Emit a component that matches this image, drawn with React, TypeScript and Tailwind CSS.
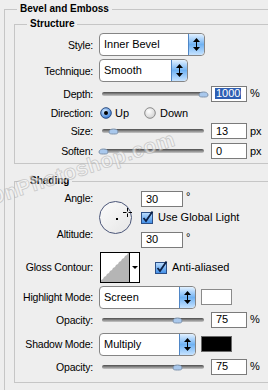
import React from 'react';

function Spinner() {
  return (
    <div className="flex h-full w-[16px] shrink-0 items-center justify-center rounded-r-[4px] border-l border-[#4f86c6] bg-gradient-to-b from-[#e2f1ff] via-[#6fb2f3] to-[#c6e3ff]">
      <svg width="7" height="13" viewBox="0 0 7 13">
        <path d="M3.5 0L7 4H0z M3 4h1v5H3z M0 9h7l-3.5 4z" fill="#000" />
      </svg>
    </div>
  );
}

function Select({ value, width }: { value: string; width: string }) {
  return (
    <div className={`flex h-[23px] items-center overflow-hidden rounded-[4px] border border-[#858585] bg-white ${width}`}>
      <span className="flex-1 pl-[4px] text-[11px]">{value}</span>
      <Spinner />
    </div>
  );
}

function Slider({ thumb }: { thumb: number }) {
  return (
    <div className="relative flex h-[14px] w-[106px] shrink-0 items-center pl-[3px]">
      <div className="h-[4px] w-[102px] rounded-full bg-gradient-to-b from-[#4c4c4c] via-[#8a8a8a] to-[#c8c8c8]" />
      <svg className="absolute top-[4px]" style={{ left: thumb - 5 }} width="11" height="7" viewBox="0 0 11 7">
        <path d="M1 4C1 2 3 1 5.5 1S10 2 10 4 8 6 5.5 6 1 6 1 4z" fill="#a9c8ec" stroke="#7f94ad" strokeWidth="1" />
      </svg>
    </div>
  );
}

function NumBox({ value, width = 'w-[36px]', selected = false }: { value: string; width?: string; selected?: boolean }) {
  return (
    <div className={`flex h-[16px] shrink-0 items-center border border-[#7b7b7b] bg-white pl-[3px] text-[11px] leading-none ${width}`}>
      <span className={selected ? 'bg-[#2f5fb3] px-[1px] text-white' : 'px-[1px]'}>{value}</span>
    </div>
  );
}

function Label({ children }: { children: React.ReactNode }) {
  return <div className="w-[78px] shrink-0 text-right text-[10.5px] leading-[14px] tracking-[-0.2px]">{children}</div>;
}

function Radio({ on }: { on: boolean }) {
  return on ? (
    <svg width="12" height="12" viewBox="0 0 12 12">
      <defs>
        <radialGradient id="rb" cx="0.4" cy="0.35" r="0.7">
          <stop offset="0" stopColor="#d8ecff" />
          <stop offset="1" stopColor="#2f78d8" />
        </radialGradient>
      </defs>
      <circle cx="6" cy="6" r="5.3" fill="url(#rb)" stroke="#2b4c80" />
      <circle cx="6" cy="6" r="2" fill="#000" />
    </svg>
  ) : (
    <svg width="12" height="12" viewBox="0 0 12 12">
      <defs>
        <radialGradient id="rw" cx="0.4" cy="0.35" r="0.7">
          <stop offset="0" stopColor="#ffffff" />
          <stop offset="1" stopColor="#cfcfcf" />
        </radialGradient>
      </defs>
      <circle cx="6" cy="6" r="5.3" fill="url(#rw)" stroke="#8a8a8a" />
    </svg>
  );
}

function Check() {
  return (
    <svg width="13" height="13" viewBox="0 0 13 13" className="shrink-0">
      <defs>
        <linearGradient id="cb" x1="0" y1="0" x2="0" y2="1">
          <stop offset="0" stopColor="#bfe0ff" />
          <stop offset="1" stopColor="#3d8ce6" />
        </linearGradient>
      </defs>
      <rect x="0.5" y="1.5" width="11" height="11" fill="url(#cb)" stroke="#2c4f86" />
      <path d="M2.5 7L5 10 11.5 0.5" fill="none" stroke="#0b1f44" strokeWidth="1.8" />
    </svg>
  );
}

export default function App() {
  return (
    <div className="relative h-[390px] w-[268px] overflow-hidden bg-[#eeeeee] font-['Liberation_Sans',Arial,sans-serif] text-black">
      <fieldset className="ml-[4px] mt-[3px] min-h-[400px] w-[290px] border-l border-t border-[#c6c6c6] pl-[9px]">
        <legend className="ml-[3px] px-[3px] text-[10px] font-bold leading-[12px]">Bevel and Emboss</legend>

        {/* Structure */}
        <fieldset className="mt-[3px] border border-r-0 border-[#c6c6c6] pb-[4px]">
          <legend className="ml-[12px] px-[3px] text-[10px] font-bold leading-[12px]">Structure</legend>

          <div className="mt-[3px] flex items-center gap-[6px]">
            <Label>Style:</Label>
            <Select value="Inner Bevel" width="w-[106px]" />
          </div>
          <div className="mt-[3px] flex items-center gap-[6px]">
            <Label>Technique:</Label>
            <Select value="Smooth" width="w-[89px]" />
          </div>
          <div className="mt-[3px] flex h-[17px] items-center gap-[6px]">
            <Label>Depth:</Label>
            <Slider thumb={104} />
            <NumBox value="1000" selected />
            <span className="ml-[-3px] text-[11px]">%</span>
          </div>
          <div className="mt-[4px] flex h-[14px] items-center gap-[6px]">
            <Label>Direction:</Label>
            <div className="ml-[1px] flex items-center gap-[3px] text-[11px]">
              <Radio on />
              <span>Up</span>
              <span className="ml-[12px]"><Radio on={false} /></span>
              <span className="ml-[1px]">Down</span>
            </div>
          </div>
          <div className="mt-[3px] flex h-[16px] items-center gap-[6px]">
            <Label>Size:</Label>
            <Slider thumb={14} />
            <NumBox value="13" />
            <span className="ml-[-3px] text-[11px]">px</span>
          </div>
          <div className="mt-[4px] flex h-[16px] items-center gap-[6px]">
            <Label>Soften:</Label>
            <Slider thumb={4} />
            <NumBox value="0" />
            <span className="ml-[-3px] text-[11px]">px</span>
          </div>
        </fieldset>

        {/* Shading */}
        <fieldset className="mt-[11px] border border-r-0 border-[#c6c6c6] pb-[7px]">
          <legend className="ml-[12px] px-[3px] text-[10px] font-bold leading-[12px]">Shading</legend>

          <div className="mt-[4px] flex gap-[6px]">
            <div className="flex w-[78px] shrink-0 flex-col">
              <Label>Angle:</Label>
              <div className="mt-[22px]">
                <Label>Altitude:</Label>
              </div>
            </div>
            <div className="relative mt-[10px] h-[33px] w-[33px] shrink-0 rounded-full border-[1.5px] border-[#4b5679] bg-gradient-to-br from-[#fbfbfb] to-[#e6e6e6]">
              <div className="absolute left-[16px] top-[16px] h-[2px] w-[2px] bg-black" />
              <svg className="absolute left-[23px] top-[6px]" width="9" height="9" viewBox="0 0 9 9">
                <path d="M4.5 0v3.5M4.5 5.5V9M0 4.5h3.5M5.5 4.5H9" stroke="#000" strokeWidth="1" />
              </svg>
            </div>
            <div className="ml-[3px] flex flex-col">
              <div className="flex items-start gap-[3px]">
                <NumBox value="30" width="w-[42px]" />
                <span className="text-[11px] leading-[10px]">°</span>
              </div>
              <div className="mt-[2px] flex items-center gap-[4px] text-[11px]">
                <Check />
                <span>Use Global Light</span>
              </div>
              <div className="mt-[6px] flex items-start gap-[3px]">
                <NumBox value="30" width="w-[42px]" />
                <span className="text-[11px] leading-[10px]">°</span>
              </div>
            </div>
          </div>

          <div className="mt-[4px] flex items-center gap-[6px]">
            <Label>Gloss Contour:</Label>
            <div className="ml-[1px] flex h-[31px] w-[40px] border border-black bg-white">
              <div className="w-[29px] border-r border-black">
                <svg width="28" height="29" viewBox="0 0 28 29">
                  <path d="M0 29V27L2 26 3 24 5 23 6 21 8 20 9 18 11 17 12 15 14 14 15 12 17 11 18 9 20 8 21 6 23 5 24 3 26 2 27 0H28V29z" fill="#b5b5b5" />
                </svg>
              </div>
              <div className="flex flex-1 items-center justify-center">
                <svg width="6" height="3" viewBox="0 0 6 3"><path d="M0 0h6L3 3z" fill="#000" /></svg>
              </div>
            </div>
            <div className="ml-[9px] flex items-center gap-[4px] text-[11px]">
              <Check />
              <span>Anti-aliased</span>
            </div>
          </div>

          <div className="mt-[3px] flex items-center gap-[6px]">
            <Label>Highlight Mode:</Label>
            <Select value="Screen" width="w-[97px]" />
            <div className="ml-[-1px] h-[16px] w-[31px] border border-[#8a8a8a] bg-white" />
          </div>
          <div className="mt-[3px] flex h-[16px] items-center gap-[6px]">
            <Label>Opacity:</Label>
            <Slider thumb={78} />
            <NumBox value="75" />
            <span className="ml-[-3px] text-[11px]">%</span>
          </div>
          <div className="mt-[5px] flex items-center gap-[6px]">
            <Label>Shadow Mode:</Label>
            <Select value="Multiply" width="w-[97px]" />
            <div className="ml-[-1px] h-[16px] w-[31px] border border-[#6a6a6a] bg-black" />
          </div>
          <div className="mt-[3px] flex h-[16px] items-center gap-[6px]">
            <Label>Opacity:</Label>
            <Slider thumb={78} />
            <NumBox value="75" />
            <span className="ml-[-3px] text-[11px]">%</span>
          </div>
        </fieldset>
      </fieldset>

      {/* watermark */}
      <div className="pointer-events-none absolute left-[-20px] top-[192px] origin-bottom-left rotate-[-18deg] whitespace-nowrap text-[21px] font-bold leading-[20px] tracking-[0.5px] text-[#f6f6f6] opacity-60 [-webkit-text-stroke:0.8px_#b0b0b0]">
        sOnPhotoshop.com
      </div>
    </div>
  );
}
